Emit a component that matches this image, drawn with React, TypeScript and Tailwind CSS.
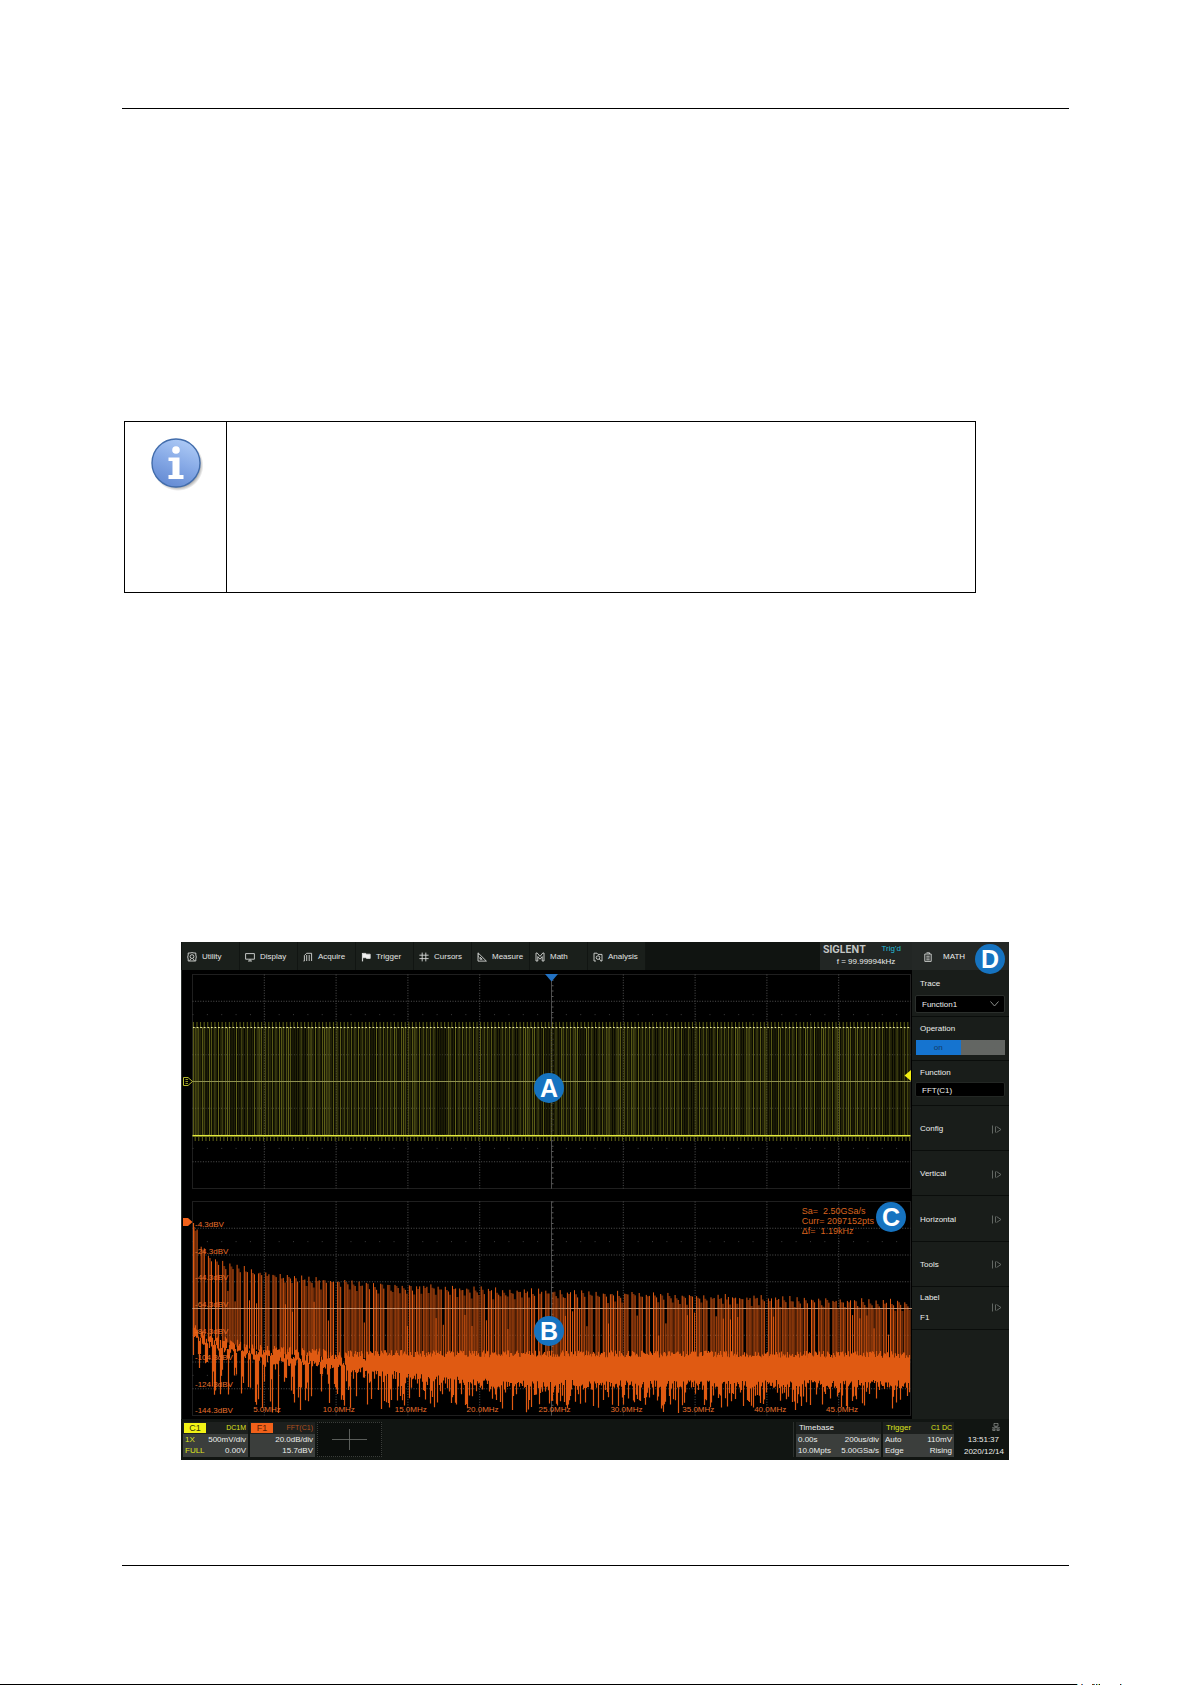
import type { ReactNode } from "react";

// Plot area, in its own units: two stacked graticules of 10 x 8 divisions
const PLOT_W = 731;
const PLOT_H = 449;
const LEFT = 11.5;
const COL = 71.8;
const ROW = 26.75;
const RIGHT = LEFT + COL * 10;
const WAVE_TOP = 4.5;
const FFT_TOP = 231.5;

function createRandom(seed: number) {
  let s = seed;
  return () => {
    s = (s * 1664525 + 1013904223) % 4294967296;
    return s / 4294967296;
  };
}

function interpolate(points: number[][], x: number) {
  for (let i = 1; i < points.length; i++) {
    if (x <= points[i][0]) {
      const [x0, y0] = points[i - 1];
      const [x1, y1] = points[i];
      return y0 + ((y1 - y0) * (x - x0)) / (x1 - x0);
    }
  }
  return points[points.length - 1][1];
}

// Square wave, 200 periods over the screen
function buildWave() {
  const rand = createRandom(7);
  const strong: string[] = [];
  const weak: string[] = [];
  const spikes: string[] = [];
  const dots: string[] = [];
  for (let i = 0; i < 200; i++) {
    const x = LEFT + 0.9 + i * 3.59;
    (rand() > 0.2 ? strong : weak).push(`M${x.toFixed(2)} 57V166`);
    (rand() > 0.85 ? strong : weak).push(`M${(x + 1.8).toFixed(2)} 57V166`);
    spikes.push(`M${x.toFixed(2)} 52V57M${(x + 1.8).toFixed(2)} 167V171`);
    dots.push(`M${(x - 0.4).toFixed(2)} 57.5h1.7`);
  }
  return {
    strong: strong.join(""),
    weak: weak.join(""),
    spikes: spikes.join(""),
    dots: dots.join(""),
  };
}

const PERIOD = 7.18;
const PEAKS = [
  [12, 254], [16, 262], [20, 275], [29, 284], [37, 288], [45, 292], [60, 295],
  [75, 299], [100, 303], [140, 307], [190, 311], [250, 314], [320, 317],
  [420, 320], [520, 323], [620, 326], [730, 329],
];
const NOISE_TOP = [[12, 352], [20, 360], [40, 364], [60, 370], [100, 376], [160, 380], [730, 381]];
const DIP_DEPTH = [[12, 20], [30, 48], [60, 46], [90, 52], [130, 40], [200, 34], [300, 24], [730, 22]];
const SOLID = [[12, 362], [40, 376], [90, 386], [160, 394], [230, 403], [320, 410], [730, 410]];
const GAP_CHANCE = [[12, 1], [70, 0.9], [120, 0.55], [240, 0], [730, 0]];

function buildSpectrum() {
  const rand = createRandom(42);
  const bright: string[] = [];
  const dim: string[] = [];
  for (let x = LEFT + 1.5; x < RIGHT - 2; x += PERIOD) {
    const top = interpolate(PEAKS, x);
    const base = (interpolate(NOISE_TOP, x) + 8).toFixed(1);
    bright.push(`M${x.toFixed(1)} ${(top + rand() * 4).toFixed(1)}V${base}`);
    bright.push(`M${(x + 3.1).toFixed(1)} ${(top + 3 + rand() * 6).toFixed(1)}V${base}`);
    dim.push(`M${(x + 1.5).toFixed(1)} ${(top + 3 + rand() * 3).toFixed(1)}V${base}`);
    if (x > 90 && rand() > 0.4) {
      dim.push(`M${(x + 4.8).toFixed(1)} ${(top + 9 + rand() * 4).toFixed(1)}V${base}`);
    }
    if (rand() > 0.65) {
      bright.push(`M${(x + 5.2).toFixed(1)} ${(top + 14 + rand() * 30).toFixed(1)}V${base}`);
    }
  }

  const noise: string[] = [];
  let inGap = false;
  let lastPhase = 0;
  for (let x = LEFT + 1; x < RIGHT; x += 1) {
    const phase = (x - LEFT - 1.5 + PERIOD) % PERIOD;
    if (phase < lastPhase) inGap = rand() < interpolate(GAP_CHANCE, x);
    lastPhase = phase;

    let top = interpolate(NOISE_TOP, x) + rand() * 7;
    let bottom = interpolate(SOLID, x) + rand() * 8;
    if (inGap) {
      // close to DC the floor is a thin line with a notch between two harmonics
      if (phase > 3.8) {
        top += 4 + rand() * 6;
        bottom = top + 8 + rand() * interpolate(DIP_DEPTH, x);
      } else {
        bottom = Math.min(bottom, top + 10 + rand() * 16);
      }
    } else if (rand() < 0.5) {
      bottom += rand() * interpolate(DIP_DEPTH, x);
    }
    if (rand() < 0.03) bottom += 12;
    noise.push(`M${x.toFixed(1)} ${top.toFixed(1)}V${Math.min(bottom, 443).toFixed(1)}`);
  }
  return { bright: bright.join(""), dim: dim.join(""), noise: noise.join("") };
}

const wave = buildWave();
const spectrum = buildSpectrum();

const INNER = [1, 2, 3, 4, 5, 6, 7, 8, 9];
const DB_LABELS = ["-4.3dBV", "-24.3dBV", "-44.3dBV", "-64.3dBV", "-84.3dBV", "-104.3dBV", "-124.3dBV", "-144.3dBV"];
const FREQ_LABELS = ["5.0MHz", "10.0MHz", "15.0MHz", "20.0MHz", "25.0MHz", "30.0MHz", "35.0MHz", "40.0MHz", "45.0MHz"];

function Graticule({ top }: { top: number }) {
  const bottom = top + ROW * 8;
  const middle = top + ROW * 4;
  return (
    <g fill="none">
      <rect x={LEFT} y={top} width={COL * 10} height={ROW * 8} stroke="#1f1f1f" />
      <g stroke="#525252" strokeWidth="1" strokeDasharray="1 1.6">
        {INNER.map((i) => (
          <path key={i} d={`M${LEFT + COL * i} ${top}V${bottom}`} />
        ))}
        {INNER.slice(0, 7).map((i) => (
          <path key={i} d={`M${LEFT} ${top + ROW * i}H${RIGHT}`} />
        ))}
      </g>
      <path
        d={`M${LEFT} ${top + ROW * 1.5}H${RIGHT}M${LEFT} ${top + ROW * 6.5}H${RIGHT}`}
        stroke="#3c3c3c"
        strokeDasharray="1 13.36"
      />
      <path d={`M${LEFT + COL * 5} ${top}V${bottom}`} stroke="#4c4c4c" />
      <path d={`M${LEFT + COL * 5 + 1} ${top}V${bottom}`} stroke="#5c5c5c" strokeWidth="2" strokeDasharray="1 4.35" />
      <path d={`M${LEFT} ${middle}H${RIGHT}`} stroke="#6e6e6e" />
    </g>
  );
}

function Plot() {
  return (
    <svg
      className="block h-full w-full"
      viewBox={`0 0 ${PLOT_W} ${PLOT_H}`}
      preserveAspectRatio="none"
      fill="none"
      aria-hidden="true"
    >
      <path d="M.5 0V449" stroke="#2b2f2c" />
      <Graticule top={WAVE_TOP} />
      <Graticule top={FFT_TOP} />

      {/* C1 trace */}
      <path d={wave.weak} stroke="#2c2d09" strokeWidth="0.9" />
      <path d={wave.strong} stroke="#6f711c" strokeWidth="0.9" />
      <path d={wave.spikes} stroke="#6c6e18" strokeWidth="0.9" />
      <path d={wave.dots} stroke="#f0f09a" strokeWidth="1" />
      <path d={`M${LEFT} 165.7H${RIGHT}`} stroke="#e3ea3c" strokeWidth="1.4" />
      <path d={`M${LEFT} 111.5H${RIGHT}`} stroke="#8f9150" />
      <path d="M370.5 57V166" stroke="#66672c" strokeDasharray="1 1.6" />

      {/* F1 trace */}
      <path d={spectrum.dim} stroke="#6c2a08" strokeWidth="2" />
      <path d={spectrum.bright} stroke="#e05a12" strokeWidth="1" />
      <path d={spectrum.noise} stroke="#e05a12" strokeWidth="1.2" />
      <path d="M12.5 253V364" stroke="#e05a12" strokeWidth="1.2" />
      <path d={`M${LEFT} 338.5H${RIGHT + 2}`} stroke="#d8a17c" strokeOpacity="0.75" />

      {/* Level and position markers */}
      <path d="M2.5 107.5H7L11.5 111.5L7 115.5H2.5Z" stroke="#b5b82c" />
      <path d="M4.5 109.5H7M4.5 111.5H7M4.5 113.5H7" stroke="#b5b82c" strokeWidth="0.8" />
      <path d="M2 248H7L11.5 252L7 256H2Z" fill="#f1611a" />
      <path d="M364 4H377L370.5 11.5Z" fill="#2272c3" />
      <path d="M730 100V111L723.5 105.5Z" fill="#f2ee12" />
    </svg>
  );
}

function Marker({ children, className }: { children: string; className: string }) {
  return (
    <span
      className={`absolute flex size-[30px] items-center justify-center rounded-full bg-[#1673c0] text-[25px] leading-[30px] font-bold text-white ${className}`}
    >
      {children}
    </span>
  );
}

function Glyph({ children }: { children: ReactNode }) {
  return (
    <svg
      className="size-[10px] shrink-0"
      viewBox="0 0 10 10"
      fill="none"
      stroke="#d6d8d6"
      strokeWidth="0.9"
      aria-hidden="true"
    >
      {children}
    </svg>
  );
}

const MENU = [
  {
    label: "Utility",
    icon: (
      <Glyph>
        <path d="M1.2 1H3L5 .6L7 1H8.8V3L9.3 5L8.8 7V9H1.2V7L.7 5L1.2 3Z" />
        <circle cx="5" cy="4.6" r="1.9" />
        <path d="M2.6 8.8L3.8 6.8M7.4 8.8L6.2 6.8" />
      </Glyph>
    ),
  },
  {
    label: "Display",
    icon: (
      <Glyph>
        <path d="M.6 1.6H9.4V7.2H.6ZM5 7.2V9M3 9H7" />
      </Glyph>
    ),
  },
  {
    label: "Acquire",
    icon: (
      <Glyph>
        <path d="M.5 9H1.4V3.5L3.6 1.3H8.6V9M3.7 9V3M6.2 9V3" />
      </Glyph>
    ),
  },
  {
    label: "Trigger",
    icon: (
      <Glyph>
        <path d="M1.5 1V9.4" strokeWidth="1.2" />
        <path d="M1.5 1.4H4.8L5.6 2.2H9.2V6.4H5.6L4.8 5.7H1.5Z" fill="#f0f0f0" />
      </Glyph>
    ),
  },
  {
    label: "Cursors",
    icon: (
      <Glyph>
        <path d="M3.2 .6V9.4M6.8 .6V9.4M.4 3.2H9.6M.4 6.6H9.6" />
      </Glyph>
    ),
  },
  {
    label: "Measure",
    icon: (
      <Glyph>
        <path d="M1 .8V9.1H9.4ZM3 5.2V7.2H5.2ZM1 2.8H2M1 4.8H2" />
      </Glyph>
    ),
  },
  {
    label: "Math",
    icon: (
      <Glyph>
        <path d="M1 1V9H2.8V4.6L5 7.2L7.2 4.6V9H9V1H7.8L5 4.4L2.2 1Z" />
      </Glyph>
    ),
  },
  {
    label: "Analysis",
    icon: (
      <Glyph>
        <path d="M3 9H1V1.2H4L5 2.4H9V9H7.6" />
        <circle cx="5" cy="5.6" r="1.8" />
        <path d="M6.3 7L8.2 9" />
      </Glyph>
    ),
  },
];

function MenuBar() {
  return (
    <header className="flex h-[28px] bg-[#101411]">
      <nav className="flex pl-px">
        {MENU.map(({ label, icon }) => (
          <button
            key={label}
            type="button"
            className="flex w-[58px] items-center gap-[5px] border-r border-[#111512] bg-[#1a1f1b] pt-[2px] pl-[5px] text-[#e2e4e2]"
          >
            {icon}
            {label}
          </button>
        ))}
      </nav>
      <div className="ml-auto w-[92px] bg-[#222624] pt-px">
        <div className="flex h-3 items-center justify-between pr-[11px] pl-[3px]">
          <span className="font-[Inter,'Liberation_Sans',sans-serif] text-[10px] font-bold text-[#c4c6c4]">
            SIGLENT
          </span>
          <span className="text-[#25bdd8]">Trig'd</span>
        </div>
        <p className="pt-[2px] text-center text-[#eceeec]">f = 99.99994kHz</p>
      </div>
    </header>
  );
}

function MoreIcon() {
  return (
    <svg className="h-[9px] w-[11px]" viewBox="0 0 11 9" fill="none" stroke="#6b6f6c" aria-hidden="true">
      <path d="M1.5 .5V8.5M4.5 1.5V7.5M5.5 1.5L10 4.5L5.5 7.5" strokeWidth="0.9" />
    </svg>
  );
}

function SidePanel() {
  return (
    <aside className="flex w-[97px] shrink-0 flex-col bg-[#191d1a] text-[#eceeec]">
      <div className="relative flex h-[28px] items-center bg-[#242826] pt-px pl-[11px]">
        <Glyph>
          <path d="M1.8 2H8.2V9.4H1.8ZM3.5 .8H6.5V2M3.3 4.2H6.7M3.3 6H6.7M3.3 7.8H6.7" />
        </Glyph>
        <h2 className="pl-[10px]">MATH</h2>
        <Marker className="top-[2px] right-[4px]">D</Marker>
      </div>

      <div className="flex h-[47px] flex-col justify-between border-b border-[#0a0d0b] pt-[9px] pr-1 pb-[3px] pl-[3px]">
        <label htmlFor="trace" className="pl-[5px]">
          Trace
        </label>
        <div className="relative">
          <select
            id="trace"
            defaultValue="Function1"
            className="block h-[18px] w-full appearance-none rounded-xs border border-[#2b2f2c] bg-black pt-px pl-[6px]"
          >
            <option>Function1</option>
            <option>Function2</option>
          </select>
          <svg
            className="pointer-events-none absolute top-[6px] right-[6px] h-[6px] w-[9px]"
            viewBox="0 0 9 6"
            fill="none"
            stroke="#8a8d8a"
            aria-hidden="true"
          >
            <path d="M.5 .5L4.5 5L8.5 .5" />
          </svg>
        </div>
      </div>

      <div className="flex h-[44px] flex-col justify-between border-b border-[#0a0d0b] pt-[7px] pr-1 pb-[5px] pl-1">
        <label htmlFor="operation" className="pl-1">
          Operation
        </label>
        <div className="relative">
          <input
            id="operation"
            type="checkbox"
            role="switch"
            defaultChecked
            className="block h-[15px] w-full appearance-none bg-[#636663] bg-linear-to-r from-[#1574d0] from-50% to-[#636663] to-50%"
          />
          <span className="pointer-events-none absolute inset-y-0 left-0 flex w-1/2 items-center justify-center pt-px text-[#123a66]">
            on
          </span>
        </div>
      </div>

      <div className="flex h-[45px] flex-col justify-between border-b border-[#0a0d0b] pt-[7px] pr-1 pb-2 pl-[3px]">
        <label htmlFor="function" className="pl-[5px]">
          Function
        </label>
        <input
          id="function"
          defaultValue="FFT(C1)"
          className="block h-[15px] w-full rounded-xs border border-[#232724] bg-black pt-px pl-[6px]"
        />
      </div>

      <div className="flex h-[224px] flex-col">
        {["Config", "Vertical", "Horizontal", "Tools"].map((label) => (
          <button
            key={label}
            type="button"
            className="flex flex-1 items-center justify-between border-b border-[#0a0d0b] pt-[2px] pr-[7px] pl-2"
          >
            {label}
            <MoreIcon />
          </button>
        ))}
        <button
          type="button"
          className="flex flex-1 items-center justify-between border-b border-[#0a0d0b] pr-[7px] pl-2 text-left"
        >
          <span className="flex flex-col gap-[10px]">
            <span>Label</span>
            <span>F1</span>
          </span>
          <MoreIcon />
        </button>
      </div>
    </aside>
  );
}

interface StatusCardProps {
  className: string;
  title: ReactNode;
  note?: ReactNode;
  rows: ReactNode[][];
}

function StatusCard({ className, title, note, rows }: StatusCardProps) {
  return (
    <section className={`flex flex-col bg-[#3b3e3c] text-[#eceeec] ${className}`}>
      <div className="flex h-3 items-center justify-between bg-[#1d201e] pr-[2px]">
        {title}
        {note}
      </div>
      {rows.map((row, i) => (
        <div key={i} className="flex h-[11px] items-center justify-between pt-px pr-[2px] pl-[2px]">
          <span>{row[0]}</span>
          <span>{row[1]}</span>
        </div>
      ))}
    </section>
  );
}

function StatusBar() {
  return (
    <footer className="flex h-[41px] gap-[2px] bg-[#111512] pt-[3px] pr-1 pb-[3px] pl-[2px]">
      <StatusCard
        className="w-[65px]"
        title={<span className="ml-px w-[22px] bg-[#f2f216] text-center text-[9px] text-[#33360a]">C1</span>}
        note={<span className="text-[7px] text-[#dfe31c]">DC1M</span>}
        rows={[
          [<span className="text-[#dfe31c]">1X</span>, "500mV/div"],
          [<span className="text-[#dfe31c]">FULL</span>, "0.00V"],
        ]}
      />
      <StatusCard
        className="w-[65px]"
        title={<span className="ml-px w-[22px] bg-[#f1611a] text-center text-[9px] text-[#5a1f04]">F1</span>}
        note={<span className="text-[7px] text-[#b0501d]">FFT(C1)</span>}
        rows={[
          ["", "20.0dB/div"],
          ["", "15.7dBV"],
        ]}
      />
      <button
        type="button"
        aria-label="Add trace"
        className="flex w-[65px] items-center justify-center border border-dotted border-[#3a3d3a] bg-[#0b0e0c]"
      >
        <svg className="h-[21px] w-[35px]" viewBox="0 0 35 21" stroke="#6f726f" strokeWidth="0.8" aria-hidden="true">
          <path d="M0 10.5H35M17.5 0V21" />
        </svg>
      </button>

      <div className="ml-auto w-px bg-[#2b2f2c]" />
      <StatusCard
        className="w-[85px]"
        title={<span className="pl-[3px]">Timebase</span>}
        rows={[
          ["0.00s", "200us/div"],
          ["10.0Mpts", "5.00GSa/s"],
        ]}
      />
      <StatusCard
        className="w-[71px]"
        title={<span className="pl-[3px] text-[#dfe31c]">Trigger</span>}
        note={<span className="text-[7px] text-[#dfe31c]">C1 DC</span>}
        rows={[
          ["Auto", "110mV"],
          ["Edge", "Rising"],
        ]}
      />
      <div className="flex w-[49px] flex-col items-end pt-px pr-px text-[#eceeec]">
        <svg
          className="mr-[3px] h-[10px] w-[10px]"
          viewBox="0 0 10 10"
          fill="none"
          stroke="#a5a8a5"
          strokeWidth="0.8"
          aria-hidden="true"
        >
          <path d="M2.5 .5H7.5V4H2.5ZM5 4V6M0 6H10M1 7.5H3.8V9.5H1ZM6.2 7.5H9V9.5H6.2Z" />
        </svg>
        <time className="pt-1 pr-[5px]">13:51:37</time>
        <time className="pt-[2px]">2020/12/14</time>
      </div>
    </footer>
  );
}

function PlotArea() {
  return (
    <div className="relative h-[449px] bg-black">
      <Plot />

      <ul className="absolute top-[250px] left-[14px] flex h-[213px] flex-col text-[#e8702c]">
        {DB_LABELS.map((label) => (
          <li key={label} className="flex-1">
            {label}
          </li>
        ))}
      </ul>

      {/* One cell per inner division line */}
      <ul className="absolute right-[34px] bottom-[4px] left-[50px] flex text-[#e8702c]">
        {FREQ_LABELS.map((label) => (
          <li key={label} className="flex-1 text-center">
            {label}
          </li>
        ))}
      </ul>

      <dl className="absolute top-[236px] right-[38px] text-[9px] leading-[10px] whitespace-pre text-[#d9641f]">
        <div>Sa=  2.50GSa/s</div>
        <div>Curr= 2097152pts</div>
        <div>Δf=  1.19kHz</div>
      </dl>

      <Marker className="top-[103px] left-[353px]">A</Marker>
      <Marker className="top-[346px] left-[353px]">B</Marker>
      <Marker className="top-[232px] right-[6px]">C</Marker>
    </div>
  );
}

function Oscilloscope() {
  return (
    <figure className="bg-black font-['Liberation_Sans',Arial,sans-serif] text-[8px] leading-[10px]">
      <div className="flex">
        <div className="min-w-0 flex-1">
          <MenuBar />
          <PlotArea />
        </div>
        <SidePanel />
      </div>
      <StatusBar />
    </figure>
  );
}

function InfoIcon() {
  return (
    <svg className="h-[54px] w-[54px]" viewBox="0 0 54 54" aria-hidden="true">
      <defs>
        <linearGradient id="info-fill" x1="0.7" y1="0" x2="0.3" y2="1">
          <stop offset="0" stopColor="#aecbf6" />
          <stop offset="0.5" stopColor="#86a9e6" />
          <stop offset="1" stopColor="#6289d2" />
        </linearGradient>
        <radialGradient id="info-shadow">
          <stop offset="0.85" stopColor="#9a9a9a" stopOpacity="0.8" />
          <stop offset="1" stopColor="#9a9a9a" stopOpacity="0" />
        </radialGradient>
      </defs>
      <circle cx="29" cy="28.5" r="25.5" fill="url(#info-shadow)" />
      <circle cx="27" cy="26" r="24" fill="url(#info-fill)" stroke="#416cab" strokeWidth="1.4" />
      <circle cx="27" cy="13" r="3.8" fill="#fff" />
      <path d="M19.5 20.5H30.5V38H34.5V42H19.5V38H23.5V24H19.5Z" fill="#fff" />
    </svg>
  );
}

export default function App() {
  return (
    <main className="bg-white pt-[108px]">
      <div className="mr-[123px] ml-[122px]">
        <hr className="border-t border-black" />

        <section className="mt-[312px] mr-[93px] ml-[2px] flex h-[172px] border border-black">
          <div className="flex w-[102px] justify-center border-r border-black pt-[15px]">
            <InfoIcon />
          </div>
          <p className="flex-1" />
        </section>

        <div className="mt-[349px] mr-[60px] ml-[59px]">
          <Oscilloscope />
        </div>

        <hr className="mt-[105px] border-t border-black" />
      </div>

      {/* Page edge, with the tops of the next line's marks */}
      <div className="mt-[118px] mr-[70px] flex items-end">
        <div className="h-px flex-1 bg-black" />
        <svg className="h-px w-[45px]" viewBox="0 0 45 1" aria-hidden="true">
          <path d="M0 0h1v1h-1z" fill="#5fd0d0" />
          <path d="M4 0h1v1h-1z" fill="#c86a2a" />
          <path d="M5 0h1v1h-1z" fill="#2a7ad0" />
          <path d="M15 0h2v1h-2z" fill="#7a3a10" />
          <path d="M17 0h1v1h-1z" fill="#1f8a9a" />
          <path d="M19 0h1v1h-1z" fill="#401030" />
          <path d="M20 0h1v1h-1z" fill="#60d0c0" />
          <path d="M21 0h1v1h-1z" fill="#d8d040" />
          <path d="M22 0h1v1h-1z" fill="#101010" />
          <path d="M43 0h1v1h-1z" fill="#5a1010" />
          <path d="M44 0h1v1h-1z" fill="#60d0e0" />
        </svg>
      </div>
    </main>
  );
}
